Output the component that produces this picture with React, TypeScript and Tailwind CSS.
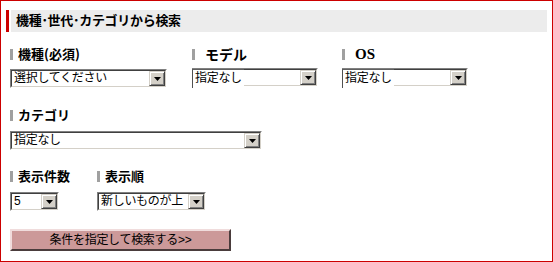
import React from "react";

const jp = "font-['Liberation_Sans','Noto_Sans_CJK_JP',sans-serif]";

function Label({ children, className = "" }: { children: React.ReactNode; className?: string }) {
  return (
    <div className="flex items-center h-4 leading-4 text-black">
      <span className="w-[3px] h-[11px] bg-[#a0a0a0] mr-[5px] shrink-0" />
      <span className={`font-bold text-[13px] whitespace-nowrap ${className}`}>{children}</span>
    </div>
  );
}

function Select({ value, width, glitch = 0 }: { value: string; width: number; glitch?: number }) {
  return (
    <div className="relative" style={{ width }}>
      <div className="flex h-[19px] border border-t-[#808080] border-l-[#808080] border-b-white border-r-white">
        <div className="flex flex-1 min-w-0 border border-t-[#404040] border-l-[#404040] border-b-[#d4d0c8] border-r-[#d4d0c8] bg-white">
          <span className="flex-1 pl-[2px] text-[12px] leading-[15px] text-black whitespace-nowrap overflow-hidden tracking-[-0.3px]">
            {value}
          </span>
          <span className="w-4 h-[15px] flex items-center justify-center bg-[#d4d0c8] border border-t-[#d4d0c8] border-l-[#d4d0c8] border-b-[#404040] border-r-[#404040] shadow-[inset_1px_1px_0_#fff,inset_-1px_-1px_0_#808080]">
            <svg width="7" height="4" viewBox="0 0 7 4">
              <path d="M0 0h7L3.5 4z" fill="#000" />
            </svg>
          </span>
        </div>
      </div>
      {glitch > 0 && (
        <div
          className="absolute left-0 top-[1px] h-[19px] bg-white border-t border-l border-t-[#606060] border-l-[#505050] pl-[2px] text-[12px] leading-[16px] text-black whitespace-nowrap tracking-[-0.3px]"
          style={{ width: glitch }}
        >
          {value}
        </div>
      )}
    </div>
  );
}

export default function App() {
  return (
    <div className={`w-[553px] h-[262px] border border-[#cc0000] bg-white ${jp}`}>
      <div className="mt-[9px] mx-[5px] border-l-[3px] border-[#cc0000] pl-[2px]">
        <div className="h-[22px] bg-[#ececec] pl-[5px] flex items-center text-[13px] font-bold text-black tracking-[-0.3px]">
          機種･世代･カテゴリから検索
        </div>
      </div>

      <div className="pl-[9px]">
        <div className="flex mt-[14px]">
          <div className="w-[182px]">
            <Label className="font-['Noto_Sans_CJK_JP',sans-serif]">機種(必須)</Label>
            <div className="mt-[7px]">
              <Select value="選択してください" width={157} />
            </div>
          </div>
          <div className="w-[150px]">
            <Label className="text-[14px] pl-[5px] font-['Noto_Sans_CJK_JP',sans-serif]">モデル</Label>
            <div className="mt-[6px]">
              <Select value="指定なし" width={126} glitch={52} />
            </div>
          </div>
          <div>
            <Label className="text-[15px] pl-[5px] font-['Liberation_Serif',serif]">OS</Label>
            <div className="mt-[6px]">
              <Select value="指定なし" width={126} glitch={52} />
            </div>
          </div>
        </div>

        <div className="mt-[19px]">
          <Label className="font-['Noto_Sans_CJK_JP',sans-serif]">カテゴリ</Label>
          <div className="mt-[8px]">
            <Select value="指定なし" width={252} />
          </div>
        </div>

        <div className="flex mt-[18px]">
          <div className="w-[87px]">
            <Label className="font-['Noto_Sans_CJK_JP',sans-serif]">表示件数</Label>
            <div className="mt-[8px]">
              <Select value="5" width={49} />
            </div>
          </div>
          <div>
            <Label className="font-['Noto_Sans_CJK_JP',sans-serif]">表示順</Label>
            <div className="mt-[8px]">
              <Select value="新しいものが上" width={109} />
            </div>
          </div>
        </div>

        <button className="mt-[18px] w-[221px] h-[22px] bg-[#cc9999] border-2 border-t-[#f0dcdc] border-l-[#f0dcdc] border-b-[#4a3c3c] border-r-[#4a3c3c] text-[12px] text-black leading-none tracking-[-0.3px]">
          条件を指定して検索する&gt;&gt;
        </button>
      </div>
    </div>
  );
}
